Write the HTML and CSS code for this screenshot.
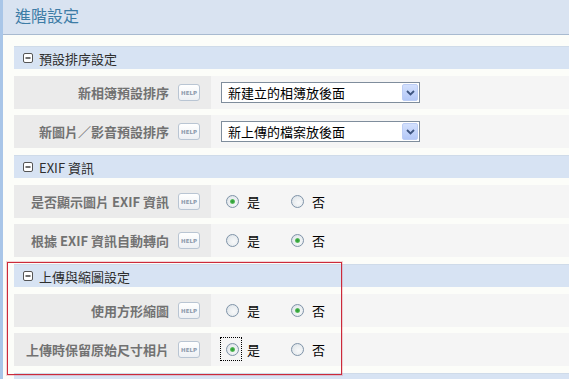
FILE: index.html
```html
<!DOCTYPE html>
<html lang="zh-Hant">
<head>
<meta charset="utf-8">
<title>進階設定</title>
<link rel="stylesheet" href="styles.css">
</head>
<body>
<div class="page">
  <div class="title">進階設定</div>
  <div class="content">
    <div class="section">
      <div class="sec-head"><svg class="toggle" width="10" height="10" viewBox="0 0 10 10"><rect x="0.5" y="0.5" width="9" height="9" rx="1.5" fill="#fff" stroke="#555"/><line x1="2.5" y1="5" x2="7.5" y2="5" stroke="#333" stroke-width="1.4"/></svg>預設排序設定</div>
      <div class="row">
        <div class="label"><span class="text">新相簿預設排序</span><span class="help">HELP</span></div>
        <div class="value">
          <div class="select"><span class="sel-text">新建立的相簿放後面</span><span class="arrow"><svg width="9" height="6" viewBox="0 0 9 6"><path d="M1 1 L4.5 4.5 L8 1" fill="none" stroke="#3e5580" stroke-width="1.8"/></svg></span></div>
        </div>
      </div>
      <div class="row last">
        <div class="label"><span class="text">新圖片／影音預設排序</span><span class="help">HELP</span></div>
        <div class="value">
          <div class="select"><span class="sel-text">新上傳的檔案放後面</span><span class="arrow"><svg width="9" height="6" viewBox="0 0 9 6"><path d="M1 1 L4.5 4.5 L8 1" fill="none" stroke="#3e5580" stroke-width="1.8"/></svg></span></div>
        </div>
      </div>
    </div>

    <div class="section">
      <div class="sec-head"><svg class="toggle" width="10" height="10" viewBox="0 0 10 10"><rect x="0.5" y="0.5" width="9" height="9" rx="1.5" fill="#fff" stroke="#555"/><line x1="2.5" y1="5" x2="7.5" y2="5" stroke="#333" stroke-width="1.4"/></svg>EXIF 資訊</div>
      <div class="row">
        <div class="label"><span class="text">是否顯示圖片 EXIF 資訊</span><span class="help">HELP</span></div>
        <div class="value">
          <div class="radios">
            <span class="opt"><span class="radio on"></span>是</span>
            <span class="opt"><span class="radio"></span>否</span>
          </div>
        </div>
      </div>
      <div class="row last">
        <div class="label"><span class="text">根據 EXIF 資訊自動轉向</span><span class="help">HELP</span></div>
        <div class="value">
          <div class="radios">
            <span class="opt"><span class="radio"></span>是</span>
            <span class="opt"><span class="radio on"></span>否</span>
          </div>
        </div>
      </div>
    </div>

    <div class="section">
      <div class="sec-head"><svg class="toggle" width="10" height="10" viewBox="0 0 10 10"><rect x="0.5" y="0.5" width="9" height="9" rx="1.5" fill="#fff" stroke="#555"/><line x1="2.5" y1="5" x2="7.5" y2="5" stroke="#333" stroke-width="1.4"/></svg>上傳與縮圖設定</div>
      <div class="row">
        <div class="label"><span class="text">使用方形縮圖</span><span class="help">HELP</span></div>
        <div class="value">
          <div class="radios">
            <span class="opt"><span class="radio"></span>是</span>
            <span class="opt"><span class="radio on"></span>否</span>
          </div>
        </div>
      </div>
      <div class="row last">
        <div class="label"><span class="text">上傳時保留原始尺寸相片</span><span class="help">HELP</span></div>
        <div class="value">
          <div class="radios">
            <span class="opt"><span class="focus"><span class="radio on"></span></span>是</span>
            <span class="opt"><span class="radio"></span>否</span>
          </div>
        </div>
      </div>
    </div>

    <div class="section">
      <div class="sec-head"></div>
    </div>
  </div>
  <div class="mark"></div>
</div>
</body>
</html>
```

FILE: styles.css
```css
html, body {
  margin: 0;
  padding: 0;
  background: #fcfdf9;
  overflow: hidden;
}

.page {
  position: relative;
  border-left: 3px solid #a9c6e8;
  height: 379px;
  overflow: hidden;
  font-family: "Noto Sans CJK TC", "Noto Sans", sans-serif;
}

.title {
  height: 34px;
  line-height: 30px;
  background: #d9e3f1;
  border-bottom: 1px solid #a8bad0;
  padding-left: 12px;
  font-size: 16px;
  color: #3d7ca6;
  white-space: nowrap;
}

.content {
  padding: 11px 0 0 11px;
}

.section {
  display: flex;
  flex-direction: column;
}

.sec-head {
  height: 23px;
  background: #d7e3f3;
  border-top: 1px solid #cfdbe9;
  box-sizing: border-box;
  display: flex;
  align-items: center;
  padding-left: 9px;
  font-size: 13px;
  line-height: 1;
  color: #2e2e2e;
  margin-bottom: 7px;
  white-space: nowrap;
}

.toggle {
  margin-right: 6px;
  flex: none;
}

.row {
  display: flex;
  height: 33px;
  margin-bottom: 6px;
}

.row.last {
  margin-bottom: 7px;
}

.label {
  width: 197px;
  flex: none;
  background: #ebebeb;
  display: flex;
  align-items: center;
  justify-content: flex-end;
  padding-right: 11px;
  box-sizing: border-box;
}

.label .text {
  font-size: 13px;
  font-weight: bold;
  color: #727272;
  line-height: 1;
  white-space: nowrap;
}

.help {
  width: 22px;
  height: 17px;
  box-sizing: border-box;
  margin-left: 9px;
  border: 1px solid #b9c5d3;
  border-radius: 3px;
  background: linear-gradient(#ffffff, #edf0f4);
  font-family: "DejaVu Sans", sans-serif;
  font-size: 5.5px;
  font-weight: bold;
  color: #8c9aab;
  display: flex;
  align-items: center;
  justify-content: center;
  flex: none;
}

.value {
  flex: 1;
  background: #f5f5f5;
  display: flex;
  align-items: center;
  padding-left: 10px;
}

.select {
  width: 199px;
  height: 21px;
  box-sizing: border-box;
  border: 1px solid #7f8d9c;
  background: #fff;
  display: flex;
  align-items: center;
  justify-content: space-between;
  padding: 0 1px 0 6px;
}

.sel-text {
  font-size: 13px;
  line-height: 1;
  color: #000;
  white-space: nowrap;
}

.arrow {
  width: 16px;
  height: 17px;
  box-sizing: border-box;
  border: 1px solid #bccdf5;
  border-radius: 2px;
  background: linear-gradient(#d3e0fd, #b4c8f7);
  display: flex;
  align-items: center;
  justify-content: center;
}

.radios {
  display: flex;
  margin-left: 5px;
}

.opt {
  width: 65px;
  display: flex;
  align-items: center;
  font-size: 13px;
  line-height: 1;
  color: #000;
}

.radio {
  width: 13px;
  height: 13px;
  box-sizing: border-box;
  border-radius: 50%;
  border: 1px solid #7f93a8;
  background: radial-gradient(circle at 60% 60%, #f8f9fa 0%, #e8ecef 55%, #d3dbe2 100%);
  margin-right: 8px;
  position: relative;
  flex: none;
}

.radio.on::after {
  content: "";
  position: absolute;
  left: 3px;
  top: 3px;
  width: 5px;
  height: 5px;
  border-radius: 50%;
  background: radial-gradient(circle, #2f9a35 0%, #3fae45 45%, #a9dcab 100%);
}

.focus {
  display: flex;
  border: 1px dotted #000;
  padding: 5px 2px 4px 5px;
  margin: -6px 5px -5px -6px;
}

.focus .radio {
  margin-right: 0;
}

.mark {
  position: absolute;
  left: 4px;
  top: 262px;
  width: 335px;
  height: 113px;
  box-sizing: border-box;
  border: 1px solid #cc2a3a;
  box-shadow: 0 0 0 1px rgba(210, 90, 110, 0.25);
  pointer-events: none;
}
```
